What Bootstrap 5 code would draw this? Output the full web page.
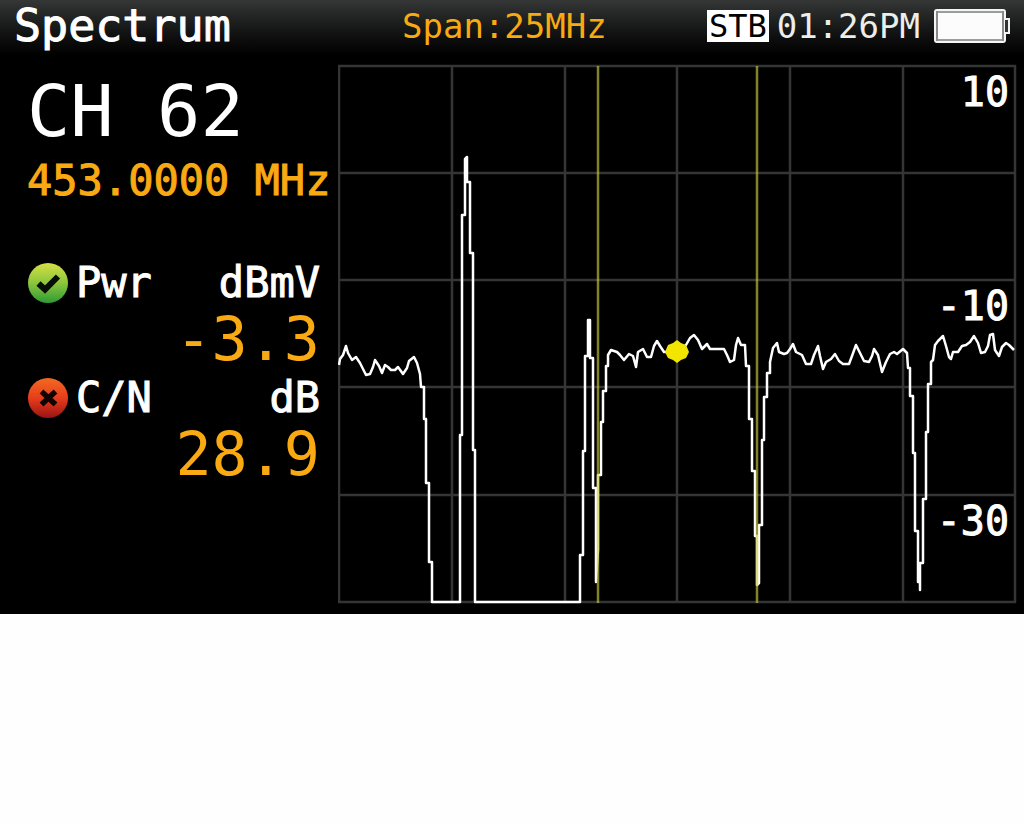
<!DOCTYPE html>
<html lang="en">
<head>
<meta charset="utf-8">
<meta name="viewport" content="width=device-width, initial-scale=1">
<title>Spectrum</title>
<link href="https://cdn.jsdelivr.net/npm/bootstrap@5.3.0/dist/css/bootstrap.min.css" rel="stylesheet">
<style>
  body { background: #fefefe; }
  .meter { background: #000; color: #fff; font-family: "DejaVu Sans Mono", monospace; padding-bottom: 10px; }
  .topbar { height: 64px; padding: 0 14px; background: linear-gradient(#343736 0, #1f2120 20px, #0d0e0d 38px, #000 56px); }
  .screen-title { flex: 0 0 388px; font-size: 45px; line-height: 52px; margin: 0; font-weight: 400; }
  .amber { color: #f9a912; }
  .span-text, .clock { font-size: 34px; line-height: 52px; }
  .clock { color: #eceeec; margin-left: 8px; }
  .stb { background: #fff; color: #000; font-size: 32px; line-height: 32px; padding: 0 2px; }
  .battery { width: 76px; height: 34px; margin-left: 14px; }
  .readings { flex: 0 0 338px; min-width: 0; padding: 11px 18px 0 27px; }
  .channel { font-size: 72px; line-height: 72px; }
  .freq { font-size: 42px; line-height: 56px; margin: 6px 0 50px; }
  .label-line { font-size: 42px; line-height: 48px; }
  .screen-title, .freq, .label-line { -webkit-text-stroke: 1px; }
  .status-icon { width: 42px; height: 44px; margin-right: 7px; }
  .reading-value { font-size: 60px; line-height: 65px; margin-bottom: 2px; }
  .plot { padding-right: 7px; min-width: 0; }
  .plot text { font-size: 40px; fill: #fff; stroke: #fff; stroke-width: 1px; text-anchor: end; }
</style>
</head>
<body>
<main class="meter">
  <header class="topbar d-flex align-items-start">
    <h1 class="screen-title">Spectrum</h1>
    <div class="span-text amber text-nowrap">Span:25MHz</div>
    <div class="d-flex align-items-center ms-auto text-nowrap">
      <span class="stb">STB</span>
      <time class="clock">01:26PM</time>
      <svg class="battery" viewBox="0 0 76 34" role="img" aria-label="Battery full">
        <rect x="1" y="1" width="70" height="32" rx="2" fill="#fbfcfb" stroke="#f4f5f4" stroke-width="2"/>
        <path d="M3 3H69M3 31H69" stroke="#9a9d9a" stroke-width="2"/>
        <path d="M3 2V32M69 2V32" stroke="#888b88" stroke-width="2"/>
        <path d="M71 10H75V24H71" fill="#333" stroke="#f0f1f0" stroke-width="2"/>
      </svg>
    </div>
  </header>

  <div class="d-flex align-items-start">
    <section class="readings text-nowrap">
      <div class="channel">CH 62</div>
      <div class="freq amber">453.0000 MHz</div>

      <div class="label-line d-flex align-items-center">
        <svg class="status-icon" viewBox="1 0 42 44" role="img" aria-label="Pass">
          <defs><linearGradient id="pass" x2="0" y2="1"><stop stop-color="#d5df45"/><stop offset=".5" stop-color="#8cc63c"/><stop offset="1" stop-color="#2e9a35"/></linearGradient></defs>
          <circle cx="22" cy="22" r="20" fill="url(#pass)"/>
          <path d="M12.500 22.500L19 28.500L32 15.500" fill="none" stroke="#080d05" stroke-width="6"/>
        </svg>
        <span>Pwr</span><span class="ms-auto">dBmV</span>
      </div>
      <div class="reading-value amber text-end">-3.3</div>

      <div class="label-line d-flex align-items-center">
        <svg class="status-icon" viewBox="1 0 42 44" role="img" aria-label="Fail">
          <defs><linearGradient id="fail" x2="0" y2="1"><stop stop-color="#f26a21"/><stop offset=".5" stop-color="#e83c1c"/><stop offset="1" stop-color="#981414"/></linearGradient></defs>
          <circle cx="22" cy="22" r="20" fill="url(#fail)"/>
          <path d="M15.500 15.500L29.500 28.500M29.500 15.500L15.500 28.500" stroke="#100403" stroke-width="5.500"/>
        </svg>
        <span>C/N</span><span class="ms-auto">dB</span>
      </div>
      <div class="reading-value amber text-end">28.9</div>
    </section>

    <section class="plot flex-grow-1">
      <svg class="d-block w-100" viewBox="338 64 679 540" role="img" aria-label="Spectrum trace">
        <path d="M339 65V603M452 65V603M565 65V603M677 65V603M790 65V603M903 65V603M1015 65V603M338 66H1016M338 173H1016M338 280H1016M338 387H1016M338 495H1016M338 602H1016" stroke="#343635" stroke-width="2.500" fill="none"/>
        <polyline fill="none" stroke="#fff" stroke-width="2.500" stroke-linejoin="round" points="
          339,365 340,359 343,355 346,346 348,353 352,360 356,357 360,363 364,371 366,375 370,374 373,367 375,360 379,366 382,373 385,365 388,367 391,370 395,370 398,367 403,374 407,368 409,361 414,357 417,363 420,374
          421,387 424,387 424,419 426,419 426,483 429,483 429,562 432,562 432,602 460,602 460,435 462,435 462,215 465,215 465,159 467,157 467,182 470,182 470,253 473,253 473,450 475,450 475,602
          580,602 580,555 583,555 583,451 585,451 585,356 588,356 588,320 590,320 590,358 593,358 593,488 596,488 596,582 598,550 598,475 601,475 601,422 603,422 603,391 606,391 606,366 608,366 608,355
          611,350 617,352 620,355 624,360 629,354 633,356 636,367 638,352 643,349 647,357 651,357 654,346 657,341 660,346 664,352 677,352 686,345 690,338 694,335 698,340 702,349 707,344 710,349 724,349 727,355 730,362 734,360 736,345 738,338 741,345 745,345 746,366
          749,366 749,419 752,419 752,471 755,471 755,536 757,536 757,585 759,583 759,525 762,525 762,440 764,440 764,397 767,397 767,373 770,373 770,362 773,348 777,343 779,352
          784,354 787,353 790,349 793,344 796,352 802,355 806,364 811,364 814,355 818,346 820,356 823,369 826,362 831,359 835,354 839,361 843,364 849,364 852,356 856,345 860,353 864,361 869,362 872,356 874,349 878,355 882,372 886,362 890,354 894,352 897,354 903,349 907,353
          908,368 910,368 910,396 913,396 913,453 915,453 915,531 918,531 918,582 920,582 920,590 920,563 923,563 923,499 926,499 926,432 928,432 928,384 931,384 931,362 933,360
          935,345 938,341 943,336 946,346 949,357 951,359 953,352 958,352 962,346 966,345 970,342 974,336 978,343 981,353 985,352 988,346 990,335 993,334 995,350 999,356 1002,347 1006,343 1009,345 1014,350"/>
        <path d="M598 66V603M757 66V603" stroke="#c8c83c" stroke-opacity=".65" stroke-width="2.500"/>
        <path d="M677 340L681 343L686 345L689 352L686 358L681 360L677 363L673 360L668 358L665 352L668 345L673 343Z" fill="#f2e600"/>
        <text x="1009" y="106">10</text>
        <text x="1009" y="320">-10</text>
        <text x="1009" y="535">-30</text>
      </svg>
    </section>
  </div>
</main>
<script src="https://cdn.jsdelivr.net/npm/bootstrap@5.3.0/dist/js/bootstrap.bundle.min.js"></script>
</body>
</html>
